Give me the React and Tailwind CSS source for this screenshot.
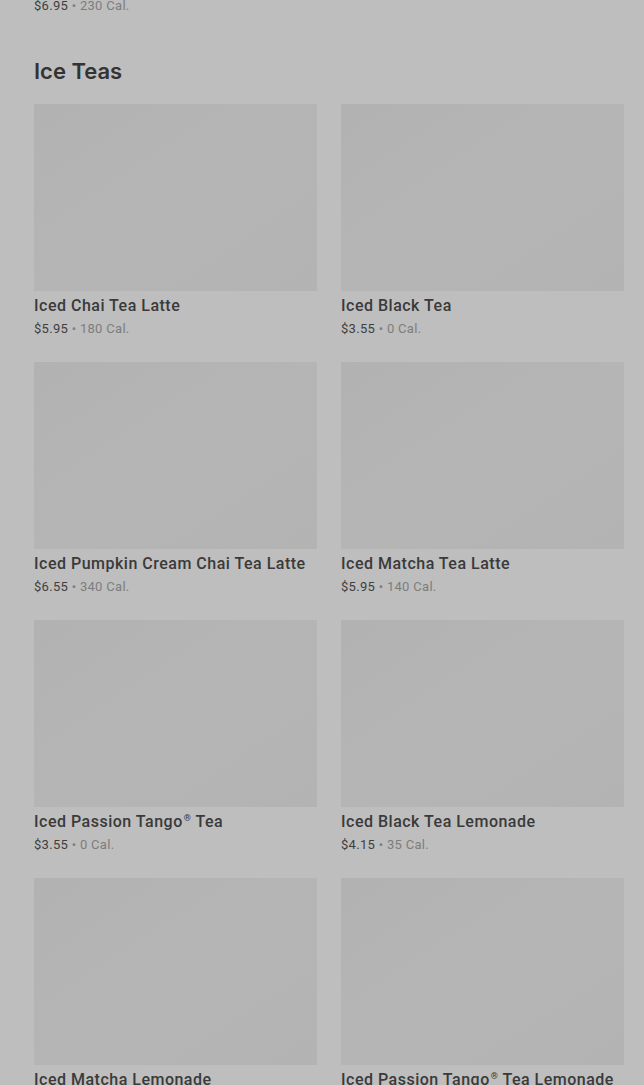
const items = [
  { name: "Iced Chai Tea Latte", price: "$5.95", cal: "180 Cal." },
  { name: "Iced Black Tea", price: "$3.55", cal: "0 Cal." },
  { name: "Iced Pumpkin Cream Chai Tea Latte", price: "$6.55", cal: "340 Cal." },
  { name: "Iced Matcha Tea Latte", price: "$5.95", cal: "140 Cal." },
  { name: "Iced Passion Tango", reg: true, tail: " Tea", price: "$3.55", cal: "0 Cal." },
  { name: "Iced Black Tea Lemonade", price: "$4.15", cal: "35 Cal." },
  { name: "Iced Matcha Lemonade", price: "$4.95", cal: "130 Cal." },
  { name: "Iced Passion Tango", reg: true, tail: " Tea Lemonade", price: "$4.15", cal: "50 Cal." },
];

function PriceLine({ price, cal }) {
  return (
    <p className="text-[13px] leading-[18px] tracking-[0.3px]">
      <span className="text-[#3f3f3f]">{price}</span>
      <span className="text-[#7d7d7d]"> • {cal}</span>
    </p>
  );
}

function Card({ item }) {
  return (
    <div className="flex flex-col">
      <div className="h-[187px] bg-gradient-to-br from-[#b2b2b2] via-[#b5b5b5] to-[#b3b3b3]" />
      <h3 className="mt-[5px] text-[16px] leading-[20px] font-medium tracking-[0.5px] text-[#3a3a3a] whitespace-nowrap">
        {item.name}
        {item.reg && <sup className="text-[9px] ml-[1px] -top-[6px]">®</sup>}
        {item.tail}
      </h3>
      <div className="mt-[4px]">
        <PriceLine price={item.price} cal={item.cal} />
      </div>
    </div>
  );
}

export default function App() {
  return (
    <div
      className="min-h-[1085px] h-[1085px] overflow-hidden bg-[#bebebe] pl-[34px] pr-[20px]"
      style={{ fontFamily: "Roboto, 'Liberation Sans', sans-serif" }}
    >
      <div className="-mt-[3px]">
        <PriceLine price="$6.95" cal="230 Cal." />
      </div>
      <h2
        className="mt-[42px] text-[22px] leading-[28px] font-semibold text-[#333333]"
        style={{ fontFamily: "Inter, Roboto, sans-serif" }}
      >
        Ice Teas
      </h2>
      <div className="mt-[19px] grid grid-cols-2 gap-x-[24px] gap-y-[24px]">
        {items.map((item) => (
          <Card key={item.name + (item.tail || "")} item={item} />
        ))}
      </div>
    </div>
  );
}
